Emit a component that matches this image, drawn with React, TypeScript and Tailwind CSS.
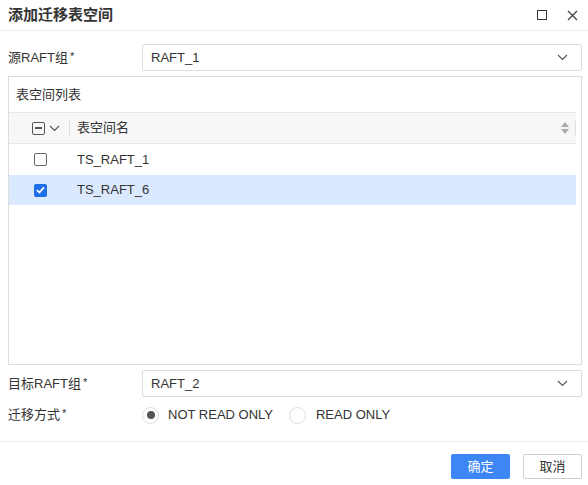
import React from "react";

const Chevron = ({ className = "" }: { className?: string }) => (
  <svg width="11" height="7" viewBox="0 0 11 7" className={className}>
    <path d="M1 1 L5.5 5.5 L10 1" fill="none" stroke="#555" strokeWidth="1.1" />
  </svg>
);

export default function App() {
  return (
    <div
      className="w-[588px] h-[485px] bg-white text-[13px] text-[#333] flex flex-col"
      style={{ fontFamily: '"Liberation Sans", "Noto Sans CJK SC", sans-serif' }}
    >
      {/* header */}
      <div className="h-[31px] shrink-0 flex items-center justify-between pl-2 pr-[10px] border-b border-[#eeeeee]">
        <div className="text-[15px] font-semibold text-[#333]">添加迁移表空间</div>
        <div className="flex items-center gap-[20px]">
          <div className="w-[10px] h-[10px] border-[1.5px] border-[#333]" />
          <svg width="11" height="11" viewBox="0 0 11 11">
            <path d="M1 1 L10 10 M10 1 L1 10" stroke="#444" strokeWidth="1.3" />
          </svg>
        </div>
      </div>

      {/* body */}
      <div className="flex-1 flex flex-col pl-2 pr-[6px] pt-[13px]">
        <div className="flex items-center h-[27px]">
          <div className="w-[134px]">
            源RAFT组<span className="text-[11px] align-top ml-[2px]">*</span>
          </div>
          <div className="flex-1 h-[27px] border border-[#dcdcdc] rounded-[2px] flex items-center justify-between pl-[8px] pr-[13px]">
            <span>RAFT_1</span>
            <Chevron />
          </div>
        </div>

        <div className="mt-[5px] h-[289px] border border-[#dcdcdc] flex flex-col">
          <div className="h-[35px] flex items-center pl-[7px] pt-[1px]">表空间列表</div>
          <div className="mr-[5px] flex flex-col">
            <div className="h-[32px] bg-[#f7f7f7] border-y border-[#e6e6e6] flex items-center">
              <div className="w-[60px] flex items-center pl-[23px] gap-[4px]">
                <div className="w-[13px] h-[13px] border border-[#555] rounded-[2px] flex items-center justify-center">
                  <div className="w-[7px] h-[1.5px] bg-[#555]" />
                </div>
                <Chevron />
              </div>
              <div className="w-px h-[16px] bg-[#dedede]" />
              <div className="flex-1 pl-[7px]">表空间名</div>
              <svg width="10" height="14" viewBox="0 0 10 14" className="mr-[5px]">
                <path d="M5 1 L9 6 L1 6 Z" fill="#aaa" />
                <path d="M5 13 L9 8 L1 8 Z" fill="#aaa" />
              </svg>
              <div className="w-px h-[16px] bg-[#dedede]" />
            </div>
            <div className="h-[31px] flex items-center">
              <div className="w-[68px] pl-[25px]">
                <div className="w-[13px] h-[13px] border border-[#666] rounded-[2px] bg-white" />
              </div>
              <div>TS_RAFT_1</div>
            </div>
            <div className="h-[30px] flex items-center bg-[#dbe9fe]">
              <div className="w-[68px] pl-[25px]">
                <div className="w-[13px] h-[13px] rounded-[2px] bg-[#1f6fea] flex items-center justify-center">
                  <svg width="9" height="8" viewBox="0 0 9 8">
                    <path d="M1 4.2 L3.4 6.5 L8 1.3" fill="none" stroke="white" strokeWidth="1.8" />
                  </svg>
                </div>
              </div>
              <div>TS_RAFT_6</div>
            </div>
          </div>
        </div>

        <div className="mt-[5px] flex items-center h-[27px]">
          <div className="w-[134px]">
            目标RAFT组<span className="text-[11px] align-top ml-[2px]">*</span>
          </div>
          <div className="flex-1 h-[27px] border border-[#dcdcdc] rounded-[2px] flex items-center justify-between pl-[8px] pr-[13px]">
            <span>RAFT_2</span>
            <Chevron />
          </div>
        </div>

        <div className="flex items-center h-[36px]">
          <div className="w-[134px]">
            迁移方式<span className="text-[11px] align-top ml-[2px]">*</span>
          </div>
          <div className="flex items-center">
            <div className="w-[17px] h-[17px] rounded-full border border-[#dcdcdc] flex items-center justify-center">
              <div className="w-[8px] h-[8px] rounded-full bg-[#555]" />
            </div>
            <span className="ml-[9px]">NOT READ ONLY</span>
            <div className="ml-[16px] w-[17px] h-[17px] rounded-full border border-[#dcdcdc]" />
            <span className="ml-[10px]">READ ONLY</span>
          </div>
        </div>
      </div>

      {/* footer */}
      <div className="h-[44px] shrink-0 border-t border-[#eeeeee] flex items-start justify-end gap-[13px] pr-[6px] pt-[12px]">
        <div className="w-[59px] h-[25px] rounded-[2px] bg-[#3d86f5] text-white flex items-center justify-center">确定</div>
        <div className="w-[59px] h-[25px] rounded-[2px] border border-[#cfcfcf] text-[#333] flex items-center justify-center">取消</div>
      </div>
    </div>
  );
}
